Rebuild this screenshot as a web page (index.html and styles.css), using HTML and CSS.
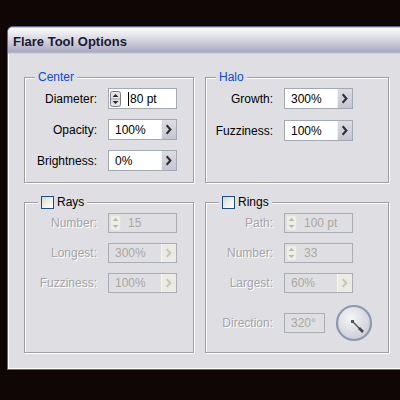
FILE: index.html
```html
<!DOCTYPE html>
<html>
<head>
<meta charset="utf-8">
<link rel="stylesheet" href="styles.css">
</head>
<body>
<div class="window">
  <div class="titlebar"><span class="title">Flare Tool Options</span></div>
  <div class="content">
    <fieldset class="group">
      <legend class="legend">Center</legend>
      <div class="rows">
        <div class="row"><span class="label w72">Diameter:</span>
          <span class="field">
            <span class="spinner"><svg width="11" height="16" viewBox="0 0 11 16"><rect x="0.5" y="0.5" width="10" height="15" rx="2" fill="#e4e4e8" stroke="#7c7c84"/><line x1="1" y1="8" x2="10" y2="8" stroke="#9c9ca4"/><path d="M2.5 6 L5.5 3 L8.5 6 Z" fill="#2a2a2a"/><path d="M2.5 10 L5.5 13 L8.5 10 Z" fill="#2a2a2a"/></svg></span>
            <span class="caret"></span><span class="value tight">80 pt</span>
          </span>
        </div>
        <div class="row"><span class="label w72">Opacity:</span>
          <span class="field"><span class="value">100%</span><span class="btn"><svg width="15" height="19" viewBox="0 0 15 19"><path d="M5 5 L9 9.5 L5 14" fill="none" stroke="#2e2e34" stroke-width="2.2"/></svg></span></span>
        </div>
        <div class="row"><span class="label w72">Brightness:</span>
          <span class="field"><span class="value">0%</span><span class="btn"><svg width="15" height="19" viewBox="0 0 15 19"><path d="M5 5 L9 9.5 L5 14" fill="none" stroke="#2e2e34" stroke-width="2.2"/></svg></span></span>
        </div>
      </div>
    </fieldset>

    <fieldset class="group">
      <legend class="legend">Halo</legend>
      <div class="rows halo">
        <div class="row"><span class="label w67">Growth:</span>
          <span class="field"><span class="value">300%</span><span class="btn"><svg width="15" height="19" viewBox="0 0 15 19"><path d="M5 5 L9 9.5 L5 14" fill="none" stroke="#2e2e34" stroke-width="2.2"/></svg></span></span>
        </div>
        <div class="row"><span class="label w67">Fuzziness:</span>
          <span class="field"><span class="value">100%</span><span class="btn"><svg width="15" height="19" viewBox="0 0 15 19"><path d="M5 5 L9 9.5 L5 14" fill="none" stroke="#2e2e34" stroke-width="2.2"/></svg></span></span>
        </div>
      </div>
    </fieldset>

    <fieldset class="group">
      <legend class="legend check-legend"><span class="check"></span><span class="legend-text">Rays</span></legend>
      <div class="rows small">
        <div class="row sm"><span class="label w72 off">Number:</span>
          <span class="field off">
            <span class="spinner"><svg width="11" height="16" viewBox="0 0 11 16"><rect x="0.5" y="0.5" width="10" height="15" rx="2" fill="#eeeee8" stroke="#e2e2da"/><path d="M2.5 6 L5.5 3 L8.5 6 Z" fill="#b8b8b0"/><path d="M2.5 10 L5.5 13 L8.5 10 Z" fill="#b8b8b0"/></svg></span>
            <span class="value gap">15</span>
          </span>
        </div>
        <div class="row sm"><span class="label w72 off">Longest:</span>
          <span class="field off"><span class="value">300%</span><span class="btn off"><svg width="15" height="18" viewBox="0 0 15 18"><path d="M5 5 L9 9 L5 13" fill="none" stroke="#c4c4bc" stroke-width="2"/></svg></span></span>
        </div>
        <div class="row sm"><span class="label w72 off">Fuzziness:</span>
          <span class="field off"><span class="value">100%</span><span class="btn off"><svg width="15" height="18" viewBox="0 0 15 18"><path d="M5 5 L9 9 L5 13" fill="none" stroke="#c4c4bc" stroke-width="2"/></svg></span></span>
        </div>
      </div>
    </fieldset>

    <fieldset class="group">
      <legend class="legend check-legend"><span class="check"></span><span class="legend-text">Rings</span></legend>
      <div class="rows small">
        <div class="row sm"><span class="label w67 off">Path:</span>
          <span class="field off">
            <span class="spinner"><svg width="11" height="16" viewBox="0 0 11 16"><rect x="0.5" y="0.5" width="10" height="15" rx="2" fill="#eeeee8" stroke="#e2e2da"/><path d="M2.5 6 L5.5 3 L8.5 6 Z" fill="#b8b8b0"/><path d="M2.5 10 L5.5 13 L8.5 10 Z" fill="#b8b8b0"/></svg></span>
            <span class="value gap">100 pt</span>
          </span>
        </div>
        <div class="row sm"><span class="label w67 off">Number:</span>
          <span class="field off">
            <span class="spinner"><svg width="11" height="16" viewBox="0 0 11 16"><rect x="0.5" y="0.5" width="10" height="15" rx="2" fill="#eeeee8" stroke="#e2e2da"/><path d="M2.5 6 L5.5 3 L8.5 6 Z" fill="#b8b8b0"/><path d="M2.5 10 L5.5 13 L8.5 10 Z" fill="#b8b8b0"/></svg></span>
            <span class="value gap">33</span>
          </span>
        </div>
        <div class="row sm"><span class="label w67 off">Largest:</span>
          <span class="field off"><span class="value">60%</span><span class="btn off"><svg width="15" height="18" viewBox="0 0 15 18"><path d="M5 5 L9 9 L5 13" fill="none" stroke="#c4c4bc" stroke-width="2"/></svg></span></span>
        </div>
        <div class="row dial-row"><span class="label w67 off">Direction:</span>
          <span class="field off short"><span class="value">320°</span></span>
          <span class="dial"><svg width="38" height="38" viewBox="0 0 38 38">
            <defs><radialGradient id="dg" cx="40%" cy="35%" r="70%"><stop offset="0" stop-color="#f6f6f8"/><stop offset="1" stop-color="#c9cad4"/></radialGradient></defs>
            <circle cx="19" cy="19" r="17" fill="url(#dg)" stroke="#8d99b2" stroke-width="2.2"/>
            <rect x="16" y="16" width="3" height="3" fill="#55555c"/>
            <line x1="17.5" y1="17.5" x2="27" y2="27" stroke="#55555c" stroke-width="1.4"/>
            <line x1="24" y1="24" x2="28" y2="28" stroke="#44444a" stroke-width="2.6"/>
          </svg></span>
        </div>
      </div>
    </fieldset>
  </div>
</div>
</body>
</html>
```

FILE: styles.css
```css
html, body {
  margin: 0;
  padding: 0;
  background: #100605;
}
body {
  width: 400px;
  height: 400px;
  overflow: hidden;
  font-family: "Liberation Sans", Arial, sans-serif;
  font-size: 12px;
  color: #000;
}
.window {
  margin: 26px 0 0 7px;
  width: 410px;
  height: 344px;
  box-sizing: border-box;
  border: 1px solid #62628a;
  border-right: none;
  border-radius: 6px 0 0 0;
  background: #dfdfe3;
  box-shadow: inset 1px 1px 0 #ffffff, inset 0 -1px 0 #ffffff;
  overflow: hidden;
}
.titlebar {
  height: 27px;
  box-sizing: border-box;
  padding: 3px 0 0 5px;
  background: linear-gradient(to bottom, #9a9ab0 0, #fbfbfd 1px, #f2f2f6 4px, #d8d8e3 12px, #b4b4c8 22px, #a7a7be 25px, #c6c6d4 26px, #d8d8de 27px);
}
.title {
  display: block;
  font-weight: bold;
  font-size: 13px;
  line-height: 24px;
  color: #1a1a32;
}
.content {
  display: grid;
  grid-template-columns: 170px 184px;
  grid-template-rows: 113px 158px;
  column-gap: 11px;
  row-gap: 12px;
  padding: 16px 0 0 16px;
}
.group {
  margin: 0;
  padding: 4px 0 0 0;
  min-width: 0;
  box-sizing: border-box;
  border: 1px solid #9e9ea4;
  box-shadow: inset 1px 1px 0 #ffffff, 1px 1px 0 #ffffff;
}
.legend {
  margin-left: 10px;
  padding: 0 3px;
  font-size: 12px;
  line-height: 14px;
  color: #0c46d8;
  background: #dfdfe3;
}
.check-legend {
  margin-left: 13px;
  padding: 0 3px;
  color: #000;
  display: flex;
  align-items: center;
}
.check {
  display: inline-block;
  width: 13px;
  height: 13px;
  box-sizing: border-box;
  border: 1px solid #1d4f7e;
  background: linear-gradient(135deg, #d8d8d2 0%, #f2f2ee 60%, #ffffff 100%);
}
.legend-text {
  margin-left: 3px;
}
.rows {
  display: flex;
  flex-direction: column;
  gap: 10px;
}
.rows.halo {
  gap: 11px;
}
.row {
  display: flex;
  align-items: center;
  height: 21px;
}
.row.sm {
  height: 20px;
}
.row.dial-row {
  height: 38px;
  margin-top: 1px;
}
.label {
  text-align: right;
  margin-right: 11px;
  white-space: nowrap;
}
.w72 { width: 72px; }
.w67 { width: 67px; }
.label.off {
  color: #a4a4a6;
  text-shadow: 1px 1px 0 #ffffff;
}
.field {
  display: flex;
  align-items: center;
  width: 69px;
  height: 100%;
  box-sizing: border-box;
  border: 1px solid #a3a9b2;
  background: #ffffff;
}
.field.off {
  background: #dfdfe3;
  border-color: #a9aeb2;
  color: #aaa79e;
}
.field.short {
  width: 41px;
  height: 20px;
}
.value {
  flex: 1;
  padding-left: 6px;
  white-space: nowrap;
}
.value.tight {
  padding-left: 1px;
}
.value.gap {
  padding-left: 7px;
}
.spinner {
  display: flex;
  margin-left: 1px;
}
.caret {
  display: inline-block;
  width: 1px;
  height: 14px;
  margin-left: 7px;
  background: #000;
}
.btn {
  display: flex;
  align-items: center;
  justify-content: center;
  width: 15px;
  height: 100%;
  box-sizing: border-box;
  border-left: 1px solid #f2f2f6;
  background: linear-gradient(to bottom, #dcdce4, #c6c6d2);
}
.btn.off {
  border-left: 1px solid #f6f6f2;
  background: #ebebe4;
}
.dial {
  display: flex;
  margin-left: 10px;
}
```
